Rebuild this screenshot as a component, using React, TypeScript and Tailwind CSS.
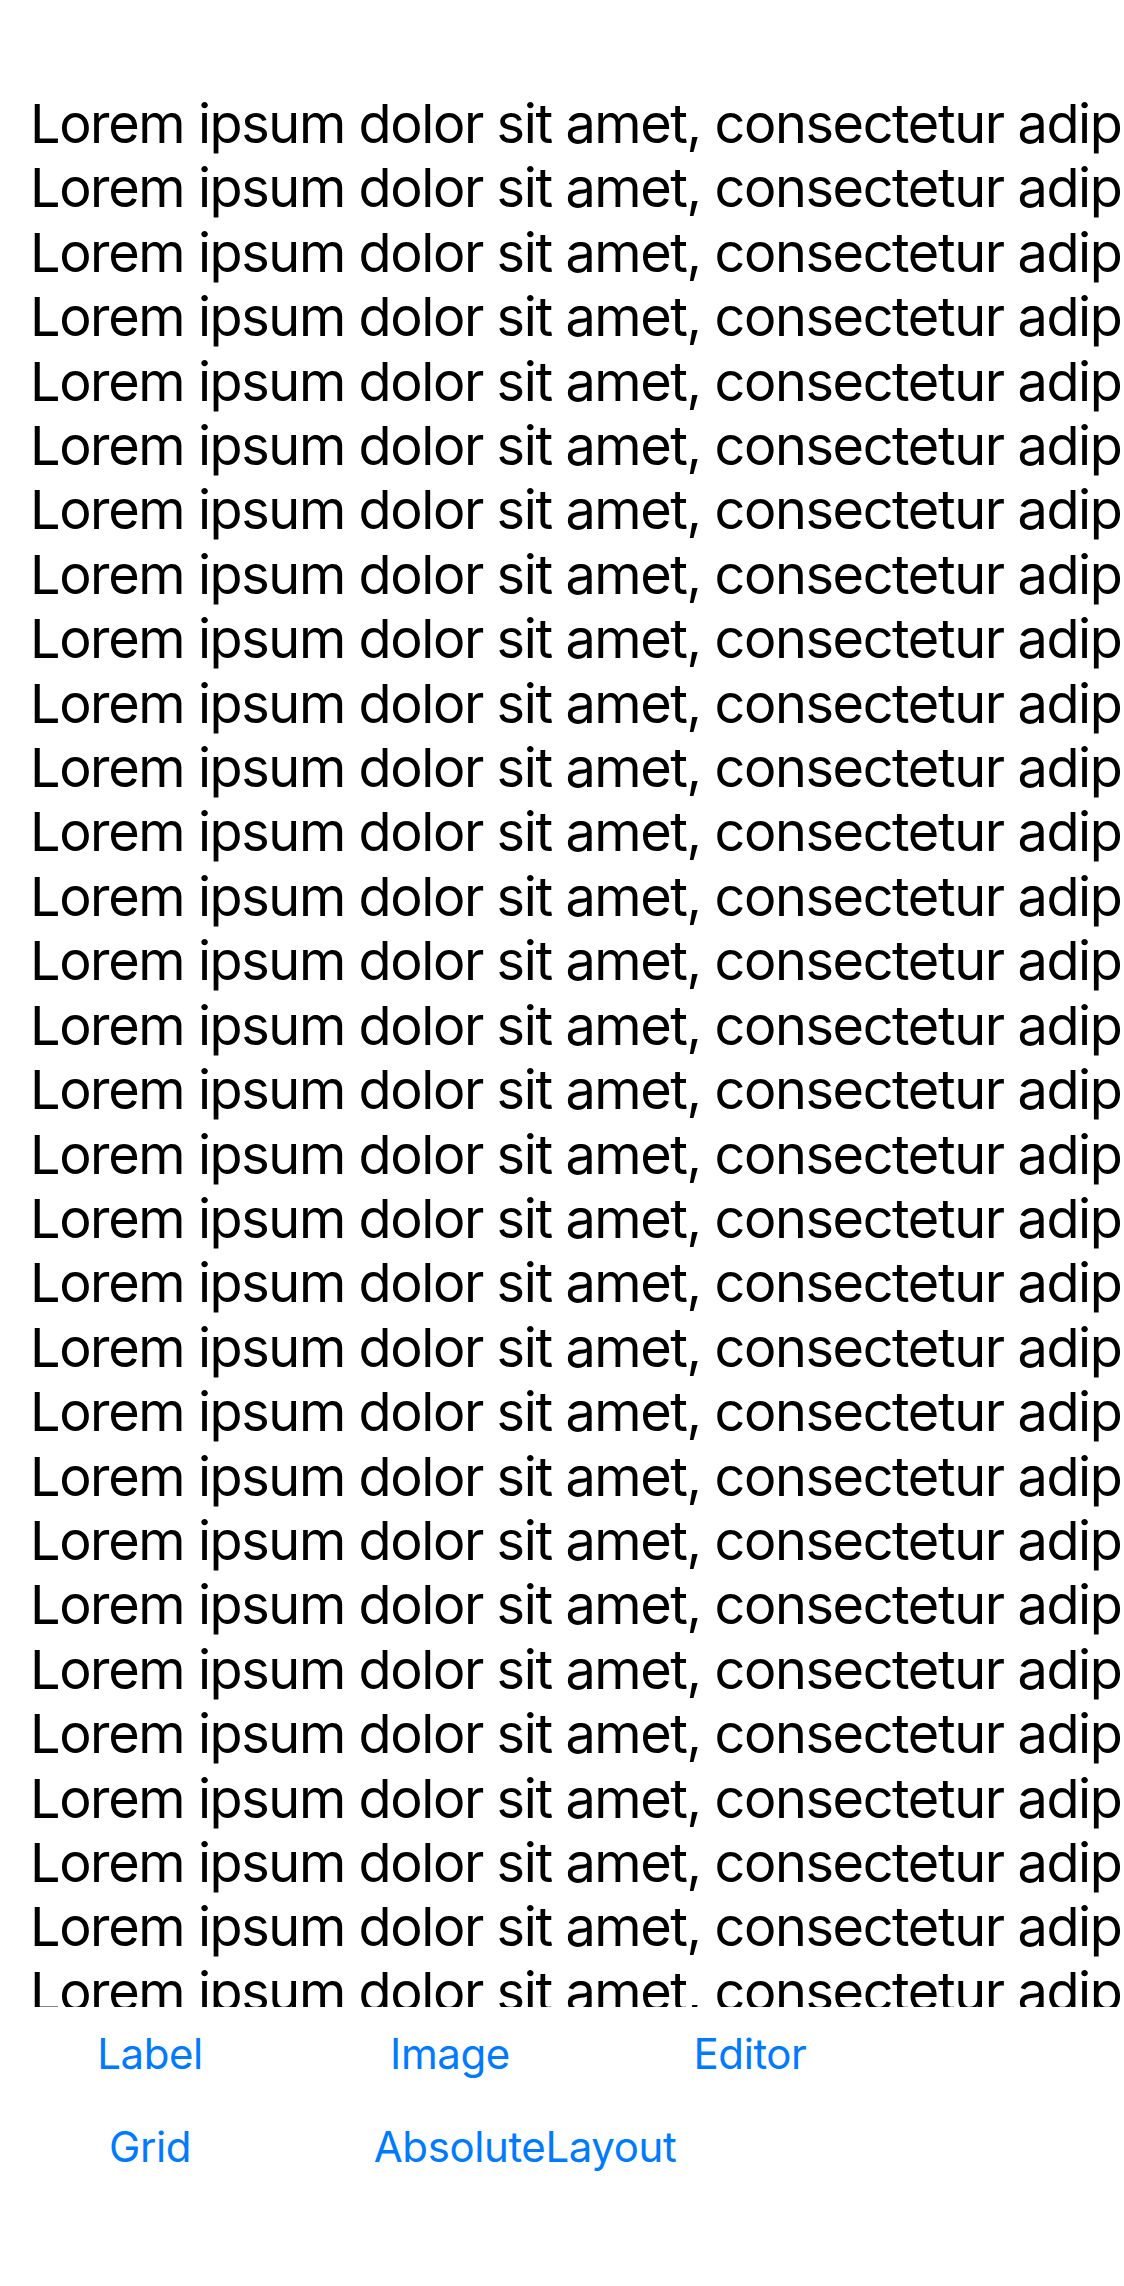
import React from "react";

const LINE = "Lorem ipsum dolor sit amet, consectetur adipiscing elit, sed do eiusmod tempor incididunt ut labore et dolore magna aliqua.";

export default function App() {
  const lines = Array.from({ length: 31 }, (_, i) => i);
  return (
    <div className="w-[1124px] h-[2286px] bg-white flex flex-col overflow-hidden font-['Inter',sans-serif]">
      <div className="h-[92px] shrink-0" />
      <div className="h-[1915px] shrink-0 overflow-hidden pl-[30px]">
        {lines.map((i) => (
          <div key={i} className="whitespace-nowrap text-[54px] leading-[64.4px] text-black tracking-[-1.4px]">
            {LINE}
          </div>
        ))}
      </div>
      <div className="flex flex-col">
        <div className="flex h-[93px]">
          <button className="w-[300px] h-full flex items-center justify-center text-[42px] leading-none tracking-[-0.4px] text-[#007AFF]">Label</button>
          <button className="w-[300px] h-full flex items-center justify-center text-[42px] leading-none tracking-[-0.4px] text-[#007AFF]">Image</button>
          <button className="w-[300px] h-full flex items-center justify-center text-[42px] leading-none tracking-[-0.4px] text-[#007AFF]">Editor</button>
        </div>
        <div className="flex h-[93px]">
          <button className="w-[300px] h-full flex items-center justify-center text-[42px] leading-none tracking-[-0.4px] text-[#007AFF]">Grid</button>
          <button className="w-[450px] h-full flex items-center justify-center text-[42px] leading-none tracking-[-0.4px] text-[#007AFF]">AbsoluteLayout</button>
        </div>
      </div>
    </div>
  );
}
